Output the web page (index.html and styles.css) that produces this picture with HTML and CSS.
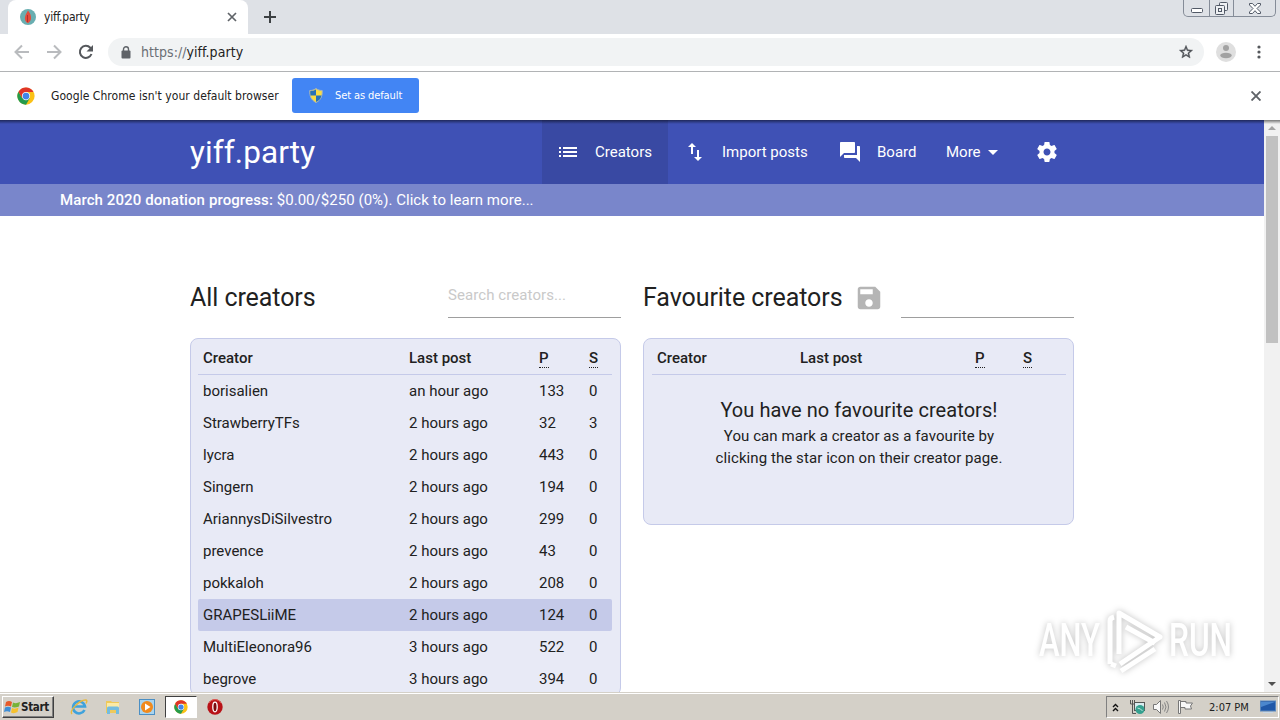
FILE: index.html
```html
<!DOCTYPE html>
<html lang="en">
<head>
  <meta charset="UTF-8">
  <title>yiff.party</title>
  <link rel="stylesheet" href="styles.css">
</head>
<body>
  <svg class="defs" width="0" height="0">
    <symbol id="chrome" viewBox="0 0 48 48">
      <circle cx="24" cy="24" r="23" fill="#fbc116"/>
      <path d="M4 12.500A23 23 0 0 0 24 47L34 30L24 24L14 30z" fill="#259b4c"/>
      <path d="M4 12.500L14 30L24 13H44A23 23 0 0 0 4 12.500z" fill="#df3428"/>
      <circle cx="24" cy="24" r="11" fill="#fff"/>
      <circle cx="24" cy="24" r="9" fill="#4285e8"/>
    </symbol>
  </svg>

  <div class="tabstrip">
    <div class="tab">
      <svg class="favicon" width="16" height="16" viewBox="0 0 16 16">
        <circle cx="8" cy="8" r="8" fill="#69aeb1"/>
        <path d="M8 1.500C10 4 11.500 7 11 10C10.600 12 9 14 7.500 14C5.500 13 4.500 10.500 5 8C5.500 5.500 7 3.500 8 1.500z" fill="#e34c3c"/>
        <path d="M7.500 6v7" stroke="#b32f2b"/>
      </svg>
      <span class="tab-title">yiff.party</span>
      <svg class="tab-close" width="10" height="10" viewBox="0 0 10 10"><path d="M1 1l8 8M9 1l-8 8" stroke="#5f6368" stroke-width="1.700"/></svg>
    </div>
    <svg class="new-tab" width="14" height="14" viewBox="0 0 14 14"><path d="M7 1v12M1 7h12" stroke="#3c4043" stroke-width="2"/></svg>
    <div class="window-buttons">
      <span class="wb wb-min"><svg width="12" height="5" viewBox="0 0 12 5"><rect x=".5" y=".5" width="11" height="4" rx="1" fill="#fff" stroke="#515966"/></svg></span>
      <span class="wb wb-max"><svg width="13" height="13" viewBox="0 0 13 13" fill="#eef0f3" stroke="#515966"><rect x="4.500" y=".5" width="8" height="8" rx="1"/><rect x=".5" y="3.500" width="9" height="9" rx="1"/><rect x="3.500" y="6.500" width="3" height="3"/></svg></span>
      <span class="wb wb-close"><svg width="12" height="11" viewBox="0 0 12 11"><path d="M.5.5h3L6 3.300L8.500.5h3v1.500L8 5.500l3.500 3.500v1.500h-3L6 7.700L3.500 10.500h-3V9L4 5.500L.5 2z" fill="#fff" stroke="#515966"/></svg></span>
    </div>
  </div>

  <div class="toolbar">
    <svg class="nav-icon dim" width="16" height="16" viewBox="0 0 16 16"><path d="M15 8H2M8 1.500L1.500 8L8 14.500"/></svg>
    <svg class="nav-icon dim" width="16" height="16" viewBox="0 0 16 16"><path d="M1 8h13M8 1.500L14.500 8L8 14.500"/></svg>
    <svg class="nav-icon" width="16" height="16" viewBox="0 0 16 16"><path d="M13.500 10A6 6 0 1 1 12.300 3.800L14 5.500"/><path d="M15 1v6.500H8.500z" fill="#55585c" stroke="none"/></svg>
    <div class="omnibox">
      <svg width="10" height="13" viewBox="0 0 10 13"><rect x=".5" y="4.500" width="9" height="8" rx="1" fill="#5f6368"/><path d="M2.500 5V3.300a2.500 2.500 0 0 1 5 0V5" fill="none" stroke="#5f6368" stroke-width="1.400"/></svg>
      <span class="url"><span class="scheme">https://</span>yiff.party</span>
      <svg class="star" width="16" height="16" viewBox="0 0 24 24"><path d="M22 9.240l-7.190-.62L12 2 9.190 8.630 2 9.240l5.460 4.730L5.820 21 12 17.270 18.180 21l-1.630-7.030L22 9.240zM12 15.400l-3.760 2.270 1-4.280-3.320-2.880 4.380-.38L12 6.100l1.710 4.040 4.380.38-3.320 2.880 1 4.280L12 15.400z" fill="#4b4f54" stroke="#4b4f54" stroke-width=".6"/></svg>
    </div>
    <svg class="avatar" width="20" height="20" viewBox="0 0 20 20"><circle cx="10" cy="10" r="10" fill="#dfdfdf"/><circle cx="10" cy="6" r="3" fill="#a2a2a2"/><ellipse cx="10" cy="13.500" rx="5.700" ry="2.700" fill="#a2a2a2"/></svg>
    <svg class="dots" width="4" height="14" viewBox="0 0 4 14" fill="#55585c"><circle cx="2" cy="2" r="1.600"/><circle cx="2" cy="7" r="1.600"/><circle cx="2" cy="12" r="1.600"/></svg>
  </div>

  <div class="infobar">
    <svg width="18" height="18"><use href="#chrome"/></svg>
    <span class="infobar-text">Google Chrome isn't your default browser</span>
    <div class="set-default">
      <svg width="14" height="15" viewBox="0 0 14 15">
        <path d="M7 .5C5 2 3 2.500.8 2.500C.5 8 2 12 7 14.500C12 12 13.500 8 13.200 2.500C11 2.500 9 2 7 .5z" fill="#f8dc45" stroke="#a5b4be"/>
        <path d="M7 1.500v6H1.500Q1 5 1.300 3Q4.500 3 7 1.500zM7 7.500h5.500Q11.500 12 7 14z" fill="#2871b8"/>
      </svg>
      <span>Set as default</span>
    </div>
    <svg class="infobar-close" width="10" height="10" viewBox="0 0 10 10"><path d="M.5.5l9 9M9.500.5l-9 9" stroke="#5f6368" stroke-width="1.900"/></svg>
  </div>

  <div class="viewport">
    <div class="page">
      <nav class="navbar">
        <span class="brand">yiff.party</span>
        <div class="nav-item active">
          <svg width="24" height="24" viewBox="0 0 24 24"><path d="M3 13h2v-2H3v2zm0 4h2v-2H3v2zm0-8h2V7H3v2zm4 4h14v-2H7v2zm0 4h14v-2H7v2zM7 7v2h14V7H7z"/></svg>
          <span>Creators</span>
        </div>
        <div class="nav-item import">
          <svg width="24" height="24" viewBox="0 0 24 24"><path d="M16 17.010V10h-2v7.010h-3L15 21l4-3.990h-3zM9 3L5 6.990h3V14h2V6.990h3L9 3z"/></svg>
          <span>Import posts</span>
        </div>
        <div class="nav-item board">
          <svg width="24" height="24" viewBox="0 0 24 24"><path d="M21 6h-2v9H6v2c0 .55.45 1 1 1h11l4 4V7c0-.55-.45-1-1-1zm-4 6V3c0-.55-.45-1-1-1H3c-.55 0-1 .45-1 1v14l4-4h10c.55 0 1-.45 1-1z"/></svg>
          <span>Board</span>
        </div>
        <div class="nav-item more">
          <span>More</span>
          <svg width="24" height="24" viewBox="0 0 24 24"><path d="M7 10l5 5 5-5z"/></svg>
        </div>
        <div class="nav-item settings">
          <svg width="24" height="24" viewBox="0 0 24 24"><path d="M19.430 12.980c.04-.32.07-.64.07-.98s-.03-.66-.07-.98l2.110-1.650c.19-.15.24-.42.12-.64l-2-3.460c-.12-.22-.39-.3-.61-.22l-2.490 1c-.52-.4-1.080-.73-1.690-.98l-.38-2.650C14.460 2.180 14.250 2 14 2h-4c-.25 0-.46.18-.49.42l-.38 2.650c-.61.25-1.170.59-1.690.98l-2.490-1c-.23-.09-.49 0-.61.22l-2 3.460c-.13.22-.07.49.12.64l2.110 1.650c-.04.32-.07.65-.07.98s.03.66.07.98l-2.110 1.650c-.19.15-.24.42-.12.64l2 3.460c.12.22.39.3.61.22l2.490-1c.52.4 1.080.73 1.690.98l.38 2.650c.03.24.24.42.49.42h4c.25 0 .46-.18.49-.42l.38-2.650c.61-.25 1.170-.59 1.690-.98l2.490 1c.23.09.49 0 .61-.22l2-3.460c.12-.22.07-.49-.12-.64l-2.110-1.650zM12 15.500c-1.930 0-3.500-1.570-3.500-3.500s1.570-3.500 3.500-3.500 3.500 1.570 3.500 3.500-1.570 3.500-3.500 3.500z"/></svg>
        </div>
      </nav>
      <div class="donation"><b>March 2020 donation progress:</b> $0.00/$250 (0%). Click to learn more...</div>

      <main class="columns">
        <section class="column">
          <div class="column-head">
            <h2>All creators</h2>
            <div class="search">Search creators...</div>
          </div>
          <div class="panel">
            <table class="all">
              <thead>
                <tr><th class="c-name">Creator</th><th class="c-last">Last post</th><th class="c-p"><abbr title="Patreon posts">P</abbr></th><th><abbr title="Shared files">S</abbr></th></tr>
              </thead>
              <tbody>
                <tr><td>borisalien</td><td>an hour ago</td><td>133</td><td>0</td></tr>
                <tr><td>StrawberryTFs</td><td>2 hours ago</td><td>32</td><td>3</td></tr>
                <tr><td>lycra</td><td>2 hours ago</td><td>443</td><td>0</td></tr>
                <tr><td>Singern</td><td>2 hours ago</td><td>194</td><td>0</td></tr>
                <tr><td>AriannysDiSilvestro</td><td>2 hours ago</td><td>299</td><td>0</td></tr>
                <tr><td>prevence</td><td>2 hours ago</td><td>43</td><td>0</td></tr>
                <tr><td>pokkaloh</td><td>2 hours ago</td><td>208</td><td>0</td></tr>
                <tr class="hover"><td>GRAPESLiiME</td><td>2 hours ago</td><td>124</td><td>0</td></tr>
                <tr><td>MultiEleonora96</td><td>3 hours ago</td><td>522</td><td>0</td></tr>
                <tr><td>begrove</td><td>3 hours ago</td><td>394</td><td>0</td></tr>
              </tbody>
            </table>
          </div>
        </section>
        <section class="column">
          <div class="column-head">
            <h2>Favourite creators</h2>
            <svg class="save" width="30" height="30" viewBox="0 0 24 24"><path d="M17 3H5c-1.110 0-2 .9-2 2v14c0 1.100.89 2 2 2h14c1.100 0 2-.9 2-2V7l-4-4zm-5 16c-1.660 0-3-1.340-3-3s1.340-3 3-3 3 1.340 3 3-1.340 3-3 3zm3-10H5V5h10v4z"/></svg>
            <div class="search"></div>
          </div>
          <div class="panel favourites">
            <table>
              <thead>
                <tr><th class="f-name">Creator</th><th class="f-last">Last post</th><th class="f-p"><abbr title="Patreon posts">P</abbr></th><th><abbr title="Shared files">S</abbr></th></tr>
              </thead>
            </table>
            <div class="empty">
              <h3>You have no favourite creators!</h3>
              <p>You can mark a creator as a favourite by<br>clicking the star icon on their creator page.</p>
            </div>
          </div>
        </section>
      </main>
    </div>
    <div class="scrollbar">
      <svg width="16" height="16" viewBox="0 0 16 16"><path d="M4 10h8L8 6z" fill="#a3a3a3"/></svg>
      <div class="thumb"></div>
      <svg width="16" height="16" viewBox="0 0 16 16"><path d="M4 6h8l-4 4z" fill="#505050"/></svg>
    </div>
    <svg class="watermark" width="220" height="76" viewBox="0 0 220 76">
      <text x="9" y="51" textLength="61" lengthAdjust="spacingAndGlyphs">ANY</text>
      <text x="139" y="51" textLength="63" lengthAdjust="spacingAndGlyphs">RUN</text>
      <g class="play">
        <path d="M80 59V16q0-3 4-4"/>
        <path d="M89 49V8L130 32L90 59"/>
        <path d="M96 22L125 38"/>
        <path d="M81 59l5 2M91 66l34-22"/>
      </g>
    </svg>
  </div>

  <div class="taskbar">
    <div class="start">
      <svg width="17" height="16" viewBox="0 0 17 16">
        <path d="M2 3Q5 1 8 3L7 7.500Q4 6 1 7.500z" fill="#e65a2a"/>
        <path d="M9 3.500Q12 5 16 3L15 7.500Q11 9 8 8z" fill="#77b339"/>
        <path d="M1 8.500Q4 7 7 8.500L6 13Q3 11.500 0 13z" fill="#3e8ed6"/>
        <path d="M8 9Q11 10.500 14.500 8.500L13.500 13Q10 15 7 13.500z" fill="#f6c12d"/>
      </svg>
      <b>Start</b>
    </div>
    <div class="quick">
      <svg width="18" height="18" viewBox="0 0 18 18">
        <path d="M14.500 12A6 6 0 1 1 15 8.500H4.500" fill="none" stroke="#3fa2dc" stroke-width="2.600"/>
        <path d="M2 16C-1 13 9 2 15.500 2Q18 2 16 5.500" fill="none" stroke="#e9b93c" stroke-width="1.400"/>
      </svg>
    </div>
    <div class="quick">
      <svg width="16" height="16" viewBox="0 0 16 16">
        <path d="M1 2h5l1 1h7v11H1z" fill="#eec95b"/>
        <path d="M2 4h12v5H2z" fill="#fbeaa6"/>
        <path d="M2 15V9q0-1.500 1.500-1.500h9Q14 7.500 14 9v6h-3v-4H5v4z" fill="#73bce0"/>
      </svg>
    </div>
    <div class="quick">
      <svg width="16" height="16" viewBox="0 0 16 16">
        <rect x=".5" y=".5" width="15" height="15" fill="#a9d4ee" stroke="#4b8fc4"/>
        <circle cx="8" cy="8" r="6" fill="#f18a1c"/><path d="M6 4.500v7L11.500 8z" fill="#fff"/>
      </svg>
    </div>
    <div class="quick running"><svg width="14" height="14"><use href="#chrome"/></svg></div>
    <div class="quick">
      <svg width="16" height="16" viewBox="0 0 16 16"><circle cx="8" cy="8" r="7.700" fill="#b81217"/><path d="M2 4A7 7 0 0 1 14 4" fill="none" stroke="#e45b54"/><ellipse cx="8" cy="8" rx="2.200" ry="4.800" fill="#7c0a0d" stroke="#fff" stroke-width="1.300"/></svg>
    </div>
    <div class="tray">
      <svg width="7" height="9" viewBox="0 0 7 9"><path d="M1 4l2.500-2.500L6 4M1 8l2.500-2.500L6 8" fill="none" stroke="#111" stroke-width="1.400"/></svg>
      <svg class="network" width="17" height="16" viewBox="0 0 17 16">
        <path d="M1.500 1v4h4V1M3.500 1v13.500H7" fill="none" stroke="#555"/>
        <rect x="5.500" y="3.500" width="10" height="8" fill="#d8ecf0" stroke="#555"/>
        <circle cx="11" cy="10.500" r="4.500" fill="#35a08f"/><path d="M8.500 9l3 1 2 2" stroke="#bfe6dd" fill="none"/>
      </svg>
      <svg class="volume" width="17" height="14" viewBox="0 0 17 14"><path d="M.5 4.500h3L7.500.5v13l-4-4h-3z" fill="#f8f8f8" stroke="#777"/><path d="M9.500 4.500q1.500 2.500 0 5M11.500 2.500q3 4.500 0 9M13.500 1q4 6 0 12" fill="none" stroke="#858585"/></svg>
      <svg class="flag" width="16" height="14" viewBox="0 0 16 14"><path d="M.5.5h2v13h-2zM2.500 1.500H8V3h6.500l-2 3 1 3H7V7.500H2.500z" fill="#f8f8f8" stroke="#777"/></svg>
      <span class="clock">2:07 PM</span>
      <svg width="16" height="14" viewBox="0 0 16 14"><rect x=".5" y="1" width="15" height="10" fill="#2058a8" stroke="#5b88bd"/><path d="M1 2h14L1 7z" fill="#4b87ce"/><path d="M3 12.500h10" stroke="#c8d7e5"/></svg>
    </div>
  </div>
</body>
</html>
```
FILE: styles.css
```css
* {
  box-sizing: border-box;
}

body {
  margin: 0;
  width: 1280px;
  height: 720px;
  overflow: hidden;
  display: flex;
  flex-direction: column;
  background: #fff;
  font-family: "DejaVu Sans Condensed", "DejaVu Sans", sans-serif;
  color: #212121;
}

svg {
  display: block;
  flex: none;
}

.defs {
  position: absolute;
}

/* browser chrome */
.tabstrip {
  display: flex;
  height: 34px;
  background: #dee1e6;
  padding-left: 8px;
}

.tab {
  display: flex;
  align-items: center;
  width: 240px;
  padding: 0 11px 0 12px;
  background: #fff;
  border-radius: 8px 8px 0 0;
}

.tab-title {
  margin-left: 8px;
  flex: 1;
  font-size: 12px;
  letter-spacing: -0.25px;
}

.new-tab {
  margin: 10px 0 0 15px;
}

.window-buttons {
  display: flex;
  margin: 0 4px 0 auto;
  height: 17px;
  border: 1px solid #858c98;
  border-top: none;
  border-radius: 0 0 5px 5px;
}

.wb {
  display: flex;
  justify-content: center;
}

.wb-min {
  width: 25px;
  padding-top: 8px;
}

.wb-max {
  width: 25px;
  padding-top: 2px;
  border: solid #858c98;
  border-width: 0 1px;
}

.wb-close {
  width: 41px;
  padding-top: 3px;
}

.toolbar {
  display: flex;
  align-items: center;
  height: 38px;
  padding: 0 0 1px 14px;
  border-bottom: 1px solid #b1b3b5;
}

.nav-icon {
  margin-right: 16px;
  fill: none;
  stroke: #55585c;
  stroke-width: 2;
}

.dim {
  stroke: #b9bbbe;
}

.omnibox {
  display: flex;
  align-items: center;
  width: 1096px;
  height: 28px;
  margin-left: -2px;
  padding: 0 10px 0 13px;
  background: #f1f3f4;
  border-radius: 14px;
}

.url {
  flex: 1;
  margin-left: 10px;
  font-size: 14px;
  letter-spacing: 0.05px;
}

.scheme {
  color: #6b6f74;
}

.avatar {
  margin-left: 12px;
}

.dots {
  margin-left: 21px;
}

.infobar {
  display: flex;
  align-items: center;
  height: 48px;
  padding: 0 19px 1px 17px;
}

.infobar-text {
  width: 241px;
  margin-left: 16px;
  font-size: 12px;
  letter-spacing: 0.05px;
  white-space: nowrap;
}

.set-default {
  display: flex;
  align-items: center;
  width: 127px;
  height: 35px;
  padding-left: 17px;
  background: #4285f4;
  border-radius: 3px;
  color: #fff;
  font-size: 11px;
  letter-spacing: -0.1px;
  white-space: nowrap;
}

.set-default span {
  margin-left: 12px;
}

.infobar-close {
  margin-left: auto;
}

/* page */
.viewport {
  position: relative;
  display: flex;
  height: 572px;
  overflow: hidden;
}

.viewport::before {
  content: "";
  position: absolute;
  z-index: 1;
  width: 100%;
  height: 4px;
  background: linear-gradient(rgba(0, 0, 0, 0.5), rgba(0, 0, 0, 0));
}

.page {
  width: 1264px;
  font-family: Roboto, sans-serif;
  font-size: 15px;
}

.navbar {
  display: flex;
  height: 64px;
  padding-left: 190px;
  background: #3f51b5;
  color: #fff;
}

.brand {
  width: 352px;
  font-size: 31.5px;
  letter-spacing: 0.1px;
  line-height: 66px;
}

.nav-item {
  display: flex;
  align-items: center;
  height: 64px;
}

.nav-item svg {
  fill: #fff;
}

.nav-item span {
  white-space: nowrap;
}

.active {
  width: 126px;
  padding-left: 14px;
  background: #3949a3;
}

.active span,
.import span,
.board span {
  margin-left: 15px;
}

.import {
  width: 155px;
  padding-left: 15px;
}

.board {
  width: 123px;
  padding-left: 15px;
}

.more {
  width: 89px;
}

.donation {
  height: 32px;
  padding-left: 60px;
  background: #7986cb;
  color: #fff;
  line-height: 32px;
  letter-spacing: 0.04px;
}

.donation b {
  font-weight: 500;
  letter-spacing: 0.1px;
}

.columns {
  display: flex;
  gap: 22px;
  margin: 66px 0 0 190px;
}

.column {
  width: 431px;
}

.column-head {
  display: flex;
  height: 56px;
}

h2 {
  margin: 0;
  font-size: 25px;
  font-weight: 400;
  letter-spacing: -0.07px;
  line-height: 32px;
}

.save {
  margin: 1px 0 0 12px;
  fill: #b5b5b5;
}

.search {
  width: 173px;
  height: 36px;
  margin-left: auto;
  border-bottom: 1px solid #9e9e9e;
  color: #c9c9c9;
  line-height: 26px;
  letter-spacing: 0.08px;
}

.panel {
  padding: 4px 8px 0 7px;
  background: #e8eaf6;
  border: 1px solid #c5cae9;
  border-radius: 8px;
}

.favourites {
  height: 187px;
  padding-left: 8px;
  padding-right: 7px;
}

table {
  width: 100%;
  table-layout: fixed;
  border-collapse: separate;
  border-spacing: 0;
}

th,
td {
  height: 32px;
  padding: 0 0 0 5px;
  text-align: left;
}

th {
  padding-bottom: 1px;
  border-bottom: 1px solid #c5cae9;
  font-weight: 500;
}

abbr {
  text-decoration: none;
  border-bottom: 1px dotted #212121;
}

.c-name {
  width: 206px;
}

.c-last {
  width: 130px;
}

.c-p {
  width: 50px;
}

.f-name {
  width: 143px;
}

.f-last {
  width: 175px;
}

.f-p {
  width: 48px;
}

.hover td {
  background: #c5cae9;
}

.hover td:first-child {
  border-radius: 2px 0 0 2px;
}

.hover td:last-child {
  border-radius: 0 2px 2px 0;
}

.empty {
  padding-top: 21px;
  text-align: center;
}

h3 {
  margin: 0;
  font-size: 20px;
  font-weight: 400;
  letter-spacing: 0.07px;
  line-height: 29px;
}

.empty p {
  margin: 0;
  line-height: 22px;
  letter-spacing: 0.08px;
}

.scrollbar {
  display: flex;
  flex-direction: column;
  width: 16px;
  background: #f1f1f1;
}

.thumb {
  height: 207px;
  margin: 0 2px auto;
  background: #c1c1c1;
}

.watermark {
  position: absolute;
  left: 1030px;
  top: 485px;
  fill: #fff;
  font: 500 46px Roboto, sans-serif;
  filter: drop-shadow(0 0 3px rgba(0, 0, 0, 0.25));
}

.play {
  fill: none;
  stroke: #fff;
  stroke-width: 5;
  stroke-linejoin: round;
}

/* taskbar */
.taskbar {
  display: flex;
  align-items: center;
  height: 28px;
  padding: 2px 0 0 2px;
  background: #d4d0c8;
  box-shadow: inset 0 1px #d4d0c8, inset 0 2px #fff;
}

.start {
  display: flex;
  align-items: center;
  width: 52px;
  height: 22px;
  padding-left: 1px;
  margin-right: 9px;
  border: 1px solid;
  border-color: #fff #404040 #404040 #fff;
  box-shadow: inset -1px -1px #808080;
  font-size: 11.5px;
}

.start b {
  letter-spacing: -0.3px;
}

.quick {
  display: flex;
  align-items: center;
  justify-content: center;
  width: 32px;
  height: 22px;
  margin-right: 2px;
}

.running {
  background: #fff;
  border: 1px solid;
  border-color: #404040 #fff #fff #404040;
}

.tray {
  display: flex;
  align-items: center;
  width: 173px;
  height: 22px;
  margin: 0 1px 0 auto;
  padding-left: 5px;
  border: 1px solid;
  border-color: #808080 #fff #fff #808080;
}

.network {
  margin-left: 10px;
}

.volume {
  margin-left: 7px;
}

.flag {
  margin-left: 8px;
}

.clock {
  width: 51px;
  margin-left: 15px;
  font-size: 11px;
  letter-spacing: 0;
  white-space: nowrap;
}
```
